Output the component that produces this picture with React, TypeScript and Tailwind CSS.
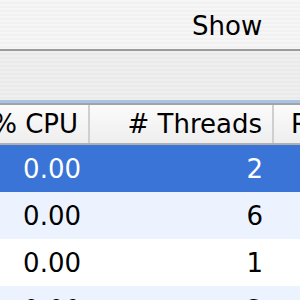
import React from "react";

const rows = [
  { cpu: "0.00", th: "2", sel: true, bg: "bg-[#3a74d6]" },
  { cpu: "0.00", th: "6", sel: false, bg: "bg-[#edf3fe]" },
  { cpu: "0.00", th: "1", sel: false, bg: "bg-white" },
  { cpu: "0.00", th: "2", sel: false, bg: "bg-[#edf3fe]" },
];

export default function App() {
  return (
    <div
      className="w-[300px] h-[300px] overflow-hidden flex flex-col bg-white text-[26px] text-black"
      style={{ fontFamily: '"DejaVu Sans", "Lucida Grande", sans-serif' }}
    >
      <div className="h-[49px] shrink-0 flex items-center pl-[192px] bg-[repeating-linear-gradient(180deg,#f6f6f6_0px,#f6f6f6_2px,#f1f1f1_2px,#f1f1f1_4px)]">
        <span className="leading-none pt-[2px]">Show</span>
      </div>
      <div className="h-[2px] shrink-0 bg-[#9b9b9b]" />
      <div className="h-[49px] shrink-0 bg-[repeating-linear-gradient(180deg,#efefef_0px,#efefef_2px,#eaeaea_2px,#eaeaea_4px)]" />
      <div className="h-[3px] shrink-0 bg-[#a8c3e3]" />
      <div className="h-[2px] shrink-0 bg-[#a3a3a3]" />
      <div className="h-[38px] shrink-0 flex bg-[linear-gradient(180deg,#fbfbfb,#eeeeee)]">
        <div className="w-[88px] shrink-0 flex items-center justify-end pr-[10px] whitespace-nowrap">
          <span className="leading-none">% CPU</span>
        </div>
        <div className="w-[2px] shrink-0 bg-[#cfcfcf]" />
        <div className="w-[182px] shrink-0 flex items-center justify-end pr-[10px] whitespace-nowrap">
          <span className="leading-none">#&nbsp;Threads</span>
        </div>
        <div className="w-[2px] shrink-0 bg-[#cfcfcf]" />
        <div className="flex-1 flex items-center pl-[17px] whitespace-nowrap overflow-hidden">
          <span className="leading-none">R</span>
        </div>
      </div>
      <div className="h-[2px] shrink-0 bg-[#b0b0b0]" />
      {rows.map((r, i) => (
        <div
          key={i}
          className={`h-[47px] shrink-0 flex ${r.bg} ${r.sel ? "text-white" : "text-black"}`}
        >
          <div className="w-[90px] shrink-0 flex items-center justify-end pr-[9px]">
            <span className="leading-none">{r.cpu}</span>
          </div>
          <div className="w-[182px] shrink-0 flex items-center justify-end pr-[9px]">
            <span className="leading-none">{r.th}</span>
          </div>
          <div className="flex-1" />
        </div>
      ))}
    </div>
  );
}
